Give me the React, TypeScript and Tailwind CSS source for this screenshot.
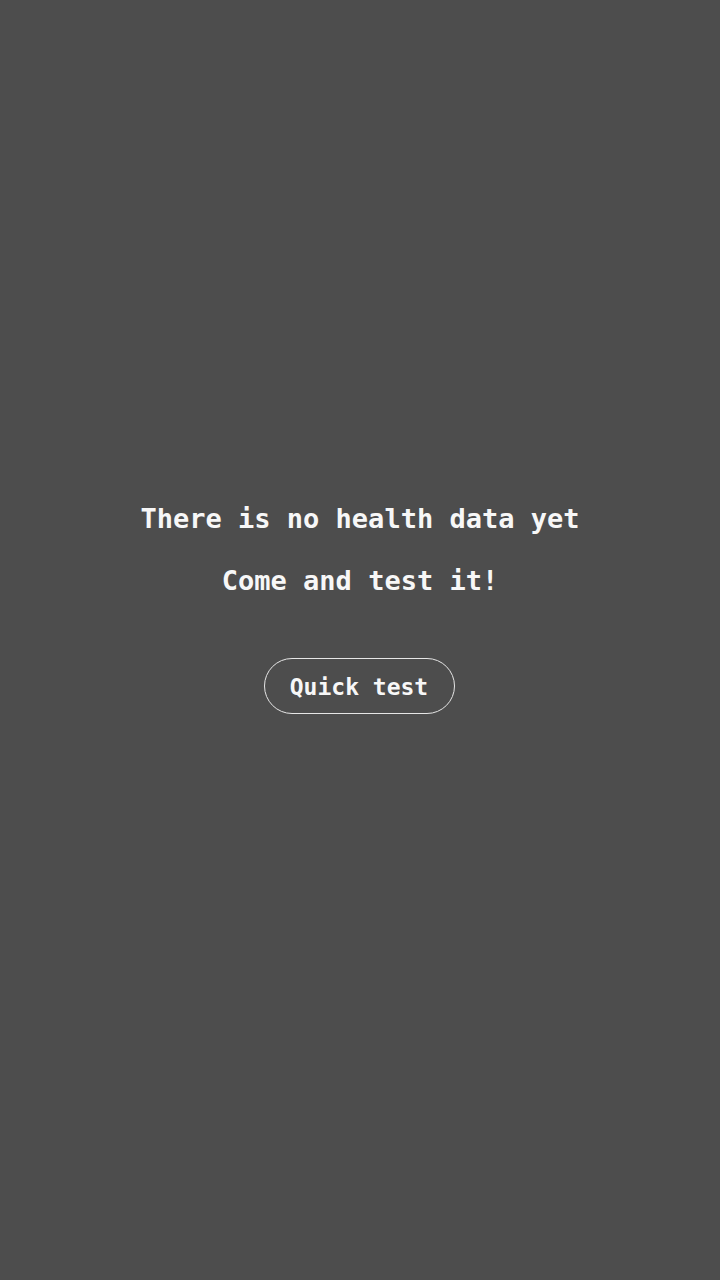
export default function App() {
  return (
    <div className="min-h-screen w-full bg-[#4d4d4d] flex flex-col items-center pt-[500px] text-[#f7f7f7] font-['DejaVu_Sans_Mono',monospace]">
      <p className="text-[27px] leading-[38px] font-bold">There is no health data yet</p>
      <p className="text-[27px] leading-[38px] font-bold mt-[24px]">Come and test it!</p>
      <button className="mt-[58px] ml-[-2px] h-[56px] w-[191px] rounded-full border border-[#e6e6e6] pt-[3px] text-[23px] font-bold text-[#f7f7f7]">
        Quick test
      </button>
    </div>
  );
}
